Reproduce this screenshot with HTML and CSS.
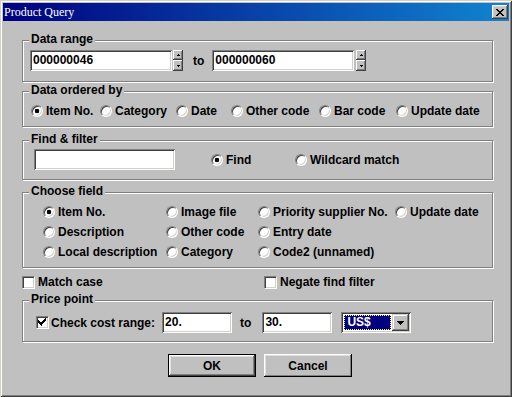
FILE: index.html
```html
<!DOCTYPE html>
<html>
<head>
<meta charset="utf-8">
<link rel="stylesheet" href="styles.css">
</head>
<body>
<div class="window">
  <div class="titlebar">
    <span class="title">Product Query</span>
    <span class="close"><svg width="8" height="7" viewBox="0 0 8 7" shape-rendering="crispEdges"><path d="M0 0h2v1h-2zM6 0h2v1h-2zM1 1h2v1h-2zM5 1h2v1h-2zM2 2h4v1h-4zM3 3h2v1h-2zM2 4h4v1h-4zM1 5h2v1h-2zM5 5h2v1h-2zM0 6h2v1h-2zM6 6h2v1h-2z" fill="#000"/></svg></span>
  </div>
  <div class="body">
    <div class="group g-range">
      <div class="group-title">Data range</div>
      <div class="range-row">
        <div class="edit w142">000000046</div>
        <span class="spin"><svg width="10" height="21" viewBox="0 0 10 21" shape-rendering="crispEdges"><rect width="10" height="21" fill="#c0c0c0"/><path d="M0 0h10v1h-10zM0 0h1v10h-1zM0 10h10v1h-10zM0 10h1v11h-1z" fill="#fff"/><path d="M9 0h1v10h-1zM0 9h10v1h-10zM9 10h1v11h-1zM0 20h10v1h-10z" fill="#404040"/><path d="M8 1h1v8h-1zM1 8h8v1h-8zM8 11h1v9h-1zM1 19h8v1h-8z" fill="#808080"/><path d="M5 4h1v1h-1zM4 5h3v1h-3zM4 15h3v1h-3zM5 16h1v1h-1z" fill="#000"/></svg></span>
        <span class="to">to</span>
        <div class="edit w142">000000060</div>
        <span class="spin spin2"><svg width="10" height="21" viewBox="0 0 10 21" shape-rendering="crispEdges"><rect width="10" height="21" fill="#c0c0c0"/><path d="M0 0h10v1h-10zM0 0h1v10h-1zM0 10h10v1h-10zM0 10h1v11h-1z" fill="#fff"/><path d="M9 0h1v10h-1zM0 9h10v1h-10zM9 10h1v11h-1zM0 20h10v1h-10z" fill="#404040"/><path d="M8 1h1v8h-1zM1 8h8v1h-8zM8 11h1v9h-1zM1 19h8v1h-8z" fill="#808080"/><path d="M5 4h1v1h-1zM4 5h3v1h-3zM4 15h3v1h-3zM5 16h1v1h-1z" fill="#000"/></svg></span>
      </div>
    </div>

    <div class="group g-order">
      <div class="group-title">Data ordered by</div>
      <div class="order-row">
        <label class="opt"><span class="radio on"></span>Item No.</label>
        <label class="opt"><span class="radio"></span>Category</label>
        <label class="opt"><span class="radio"></span>Date</label>
        <label class="opt"><span class="radio"></span>Other code</label>
        <label class="opt"><span class="radio"></span>Bar code</label>
        <label class="opt"><span class="radio"></span>Update date</label>
      </div>
    </div>

    <div class="group g-find">
      <div class="group-title">Find &amp; filter</div>
      <div class="find-row">
        <div class="edit w141"></div>
        <label class="opt"><span class="radio on"></span>Find</label>
        <label class="opt"><span class="radio"></span>Wildcard match</label>
      </div>
    </div>

    <div class="group g-field">
      <div class="group-title">Choose field</div>
      <div class="field-grid">
        <label class="opt"><span class="radio on"></span>Item No.</label>
        <label class="opt"><span class="radio"></span>Image file</label>
        <label class="opt"><span class="radio"></span>Priority supplier No.</label>
        <label class="opt"><span class="radio"></span>Update date</label>
        <label class="opt"><span class="radio"></span>Description</label>
        <label class="opt"><span class="radio"></span>Other code</label>
        <label class="opt"><span class="radio"></span>Entry date</label>
        <span></span>
        <label class="opt"><span class="radio"></span>Local description</label>
        <label class="opt"><span class="radio"></span>Category</label>
        <label class="opt"><span class="radio"></span>Code2 (unnamed)</label>
        <span></span>
      </div>
    </div>

    <div class="check-row">
      <label class="opt"><span class="check"></span>Match case</label>
      <label class="opt"><span class="check"></span>Negate find filter</label>
    </div>

    <div class="group g-price">
      <div class="group-title">Price point</div>
      <div class="price-row">
        <label class="opt"><span class="check"><svg width="11" height="11" viewBox="0 0 11 11" shape-rendering="crispEdges"><path d="M8 1h1v1h-1zM7 2h2v1h-2zM1 3h1v1h-1zM6 3h3v1h-3zM1 4h2v1h-2zM5 4h3v1h-3zM1 5h6v1h-6zM2 6h4v1h-4zM3 7h2v1h-2zM4 8h1v1h-1z" fill="#000" transform="translate(0,0)"/></svg></span>Check cost range:</label>
        <div class="edit w70 e-from">20.</div>
        <span class="to to2">to</span>
        <div class="edit w70">30.</div>
        <div class="combo">
          <span class="combo-text">US$</span>
          <span class="combo-btn"><svg width="7" height="4" viewBox="0 0 7 4" shape-rendering="crispEdges"><path d="M0 0h7v1h-7zM1 1h5v1h-5zM2 2h3v1h-3zM3 3h1v1h-1z" fill="#000"/></svg></span>
        </div>
      </div>
    </div>

    <div class="buttons">
      <button class="btn default">OK</button>
      <button class="btn">Cancel</button>
    </div>
  </div>
</div>
</body>
</html>
```
FILE: styles.css
```css
* { box-sizing: border-box; }
html, body { margin: 0; padding: 0; background: #c0c0c0; }
body {
  font: bold 12px "Liberation Sans", Arial, sans-serif;
  color: #000;
}
.window {
  width: 512px;
  height: 397px;
  padding: 3px;
  background: #c0c0c0;
  box-shadow: inset 1px 1px 0 #d4d0c8, inset -1px -1px 0 #404040,
              inset 2px 2px 0 #fff, inset -2px -2px 0 #808080;
}
.titlebar {
  height: 18px;
  display: flex;
  align-items: center;
  justify-content: space-between;
  padding: 0 1px 0 1px;
  background: linear-gradient(to right, #000080, #1084d0);
}
.title {
  font: 12px "Liberation Serif", "Times New Roman", serif;
  color: #fff;
  line-height: 18px;
}
.close {
  width: 16px;
  height: 14px;
  display: flex;
  align-items: center;
  justify-content: center;
  background: #c0c0c0;
  box-shadow: inset -1px -1px 0 #404040, inset 1px 1px 0 #fff,
              inset -2px -2px 0 #808080, inset 2px 2px 0 #d4d0c8;
}
.close svg { display: block; }
.body {
  padding: 0 16px 0 19px;
}
.group {
  border: 1px solid #808080;
  box-shadow: 1px 1px 0 #fff, inset 1px 1px 0 #fff;
}
.group-title {
  width: max-content;
  margin: -9px 0 0 6px;
  padding: 0 2px;
  line-height: 14px;
  background: #c0c0c0;
}
.g-range { margin-top: 19px; padding-bottom: 10px; }
.g-order { margin-top: 9px; padding-bottom: 7px; }
.g-find { margin-top: 13px; padding-bottom: 9px; }
.g-field { margin-top: 12px; padding-bottom: 5px; }
.g-price { margin-top: 10px; padding-bottom: 8px; }

.edit {
  height: 21px;
  line-height: 21px;
  padding-left: 3px;
  background: #fff;
  box-shadow: inset 1px 1px 0 #808080, inset -1px -1px 0 #fff,
              inset 2px 2px 0 #404040, inset -2px -2px 0 #d4d0c8;
  white-space: nowrap;
}
.w142 { width: 142px; }
.w141 { width: 141px; }
.w70 { width: 70px; }

.range-row {
  display: flex;
  align-items: center;
  margin-top: 4px;
  padding-left: 7px;
}
.spin { display: block; margin-left: 1px; height: 21px; }
.spin svg { display: block; }
.spin2 { margin-left: 2px; }
.to { margin: 0 8px 0 10px; }

.opt {
  display: flex;
  align-items: center;
  gap: 3px;
  white-space: nowrap;
}
.radio {
  width: 12px;
  height: 12px;
  flex: none;
  border-radius: 50%;
  border: 1px solid;
  border-color: #808080 #fff #fff #808080;
  background: #fff;
  box-shadow: inset 1px 1px 0 #404040, inset -1px -1px 0 #d4d0c8;
}
.radio.on {
  background: radial-gradient(circle at 50% 50%, #000 0, #000 2px, #fff 2.6px);
}
.check {
  width: 13px;
  height: 13px;
  flex: none;
  border: 1px solid;
  border-color: #808080 #fff #fff #808080;
  background: #fff;
  box-shadow: inset 1px 1px 0 #404040, inset -1px -1px 0 #d4d0c8;
}
.check svg { display: block; }

.order-row {
  display: grid;
  grid-template-columns: 69px 76px 55px 88px 77px auto;
  height: 16px;
  align-items: center;
  margin-top: 6px;
  padding-left: 8px;
}
.find-row {
  display: grid;
  grid-template-columns: 177px 84px auto;
  align-items: center;
  margin-top: 3px;
  padding-left: 11px;
}
.field-grid {
  display: grid;
  grid-template-columns: 123px 92px 137px auto;
  grid-auto-rows: 20px;
  align-items: center;
  margin-top: 4px;
  padding-left: 20px;
}
.check-row {
  display: grid;
  grid-template-columns: 242px auto;
  height: 16px;
  align-items: center;
  margin-top: 6px;
}
.check-row .opt { gap: 3px; }
.price-row {
  display: flex;
  align-items: center;
  margin-top: 6px;
  padding-left: 13px;
}
.price-row .opt { gap: 2px; }
.e-from { margin-left: 7px; }
.to2 { margin: 0 11px 0 8px; }
.combo {
  width: 70px;
  height: 21px;
  margin-left: 9px;
  display: flex;
  align-items: center;
  padding: 2px;
  gap: 1px;
  background: #fff;
  box-shadow: inset 1px 1px 0 #808080, inset -1px -1px 0 #fff,
              inset 2px 2px 0 #404040, inset -2px -2px 0 #d4d0c8;
}
.combo-text {
  flex: 1;
  height: 15px;
  line-height: 15px;
  margin-left: 1px;
  padding-left: 3px;
  background: #000080;
  color: #fff;
  outline: 1px dotted #ffff80;
  outline-offset: -1px;
}
.combo-btn {
  width: 17px;
  height: 17px;
  display: flex;
  align-items: center;
  justify-content: center;
  background: #c0c0c0;
  box-shadow: inset -1px -1px 0 #404040, inset 1px 1px 0 #d4d0c8,
              inset -2px -2px 0 #808080, inset 2px 2px 0 #fff;
}
.combo-btn svg { display: block; }

.buttons {
  display: flex;
  gap: 8px;
  margin-top: 12px;
  padding-left: 146px;
}
.btn {
  width: 88px;
  height: 23px;
  margin: 0;
  padding: 0;
  border: 0;
  font: bold 12px "Liberation Sans", Arial, sans-serif;
  color: #000;
  background: #c0c0c0;
  box-shadow: inset -1px -1px 0 #000, inset 1px 1px 0 #fff,
              inset -2px -2px 0 #808080, inset 2px 2px 0 #dfdfdf;
}
.btn.default {
  border: 1px solid #000;
  box-shadow: inset -1px -1px 0 #404040, inset 1px 1px 0 #fff,
              inset -2px -2px 0 #808080, inset 2px 2px 0 #dfdfdf;
}
```
